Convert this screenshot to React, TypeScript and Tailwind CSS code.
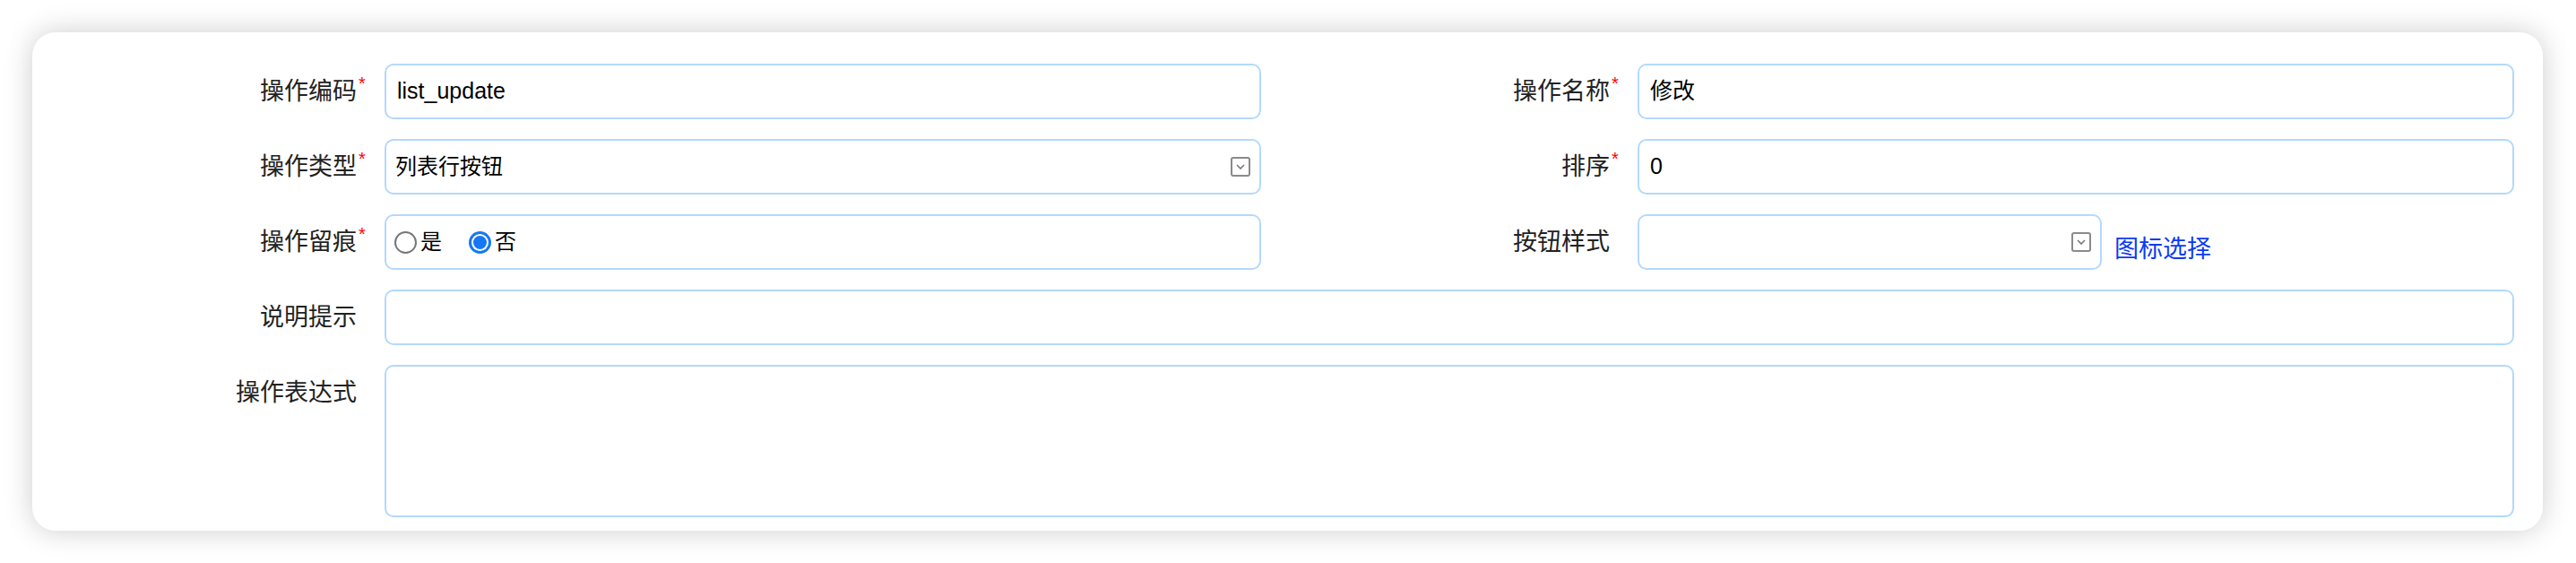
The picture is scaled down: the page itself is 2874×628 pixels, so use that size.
import React from 'react';

const FONT = '"Liberation Sans", "Noto Sans CJK SC", sans-serif';

// Right-aligned field label, with optional red required mark
const Label = ({ text, required, top }: { text: string; required?: boolean; top?: boolean }) => (
  <div className={`h-[62px] flex items-center justify-end pr-[31px] ${top ? 'self-start' : ''}`}>
    <span className="relative text-[27px] leading-none text-[#222]">
      {text}
      {required && (
        <span className="absolute left-full top-[-6px] ml-[2px] text-[20px] leading-none text-[#ff0000]">*</span>
      )}
    </span>
  </div>
);

const boxCls = 'h-[62px] rounded-[10px] border-2 border-[#b3d9fc] bg-white';

const TextBox = ({ value, className = '' }: { value?: string; className?: string }) => (
  <div className={`${boxCls} w-full flex items-center pl-[12px] text-[25px] text-black ${className}`}>
    {value}
  </div>
);

const SelectArrow = () => (
  <span className="w-[22px] h-[22px] rounded-[3px] border-2 border-[#8a8a8a] flex items-center justify-center">
    <svg width="10" height="6" viewBox="0 0 10 6" fill="none">
      <path d="M1 1l4 4 4-4" stroke="#777" strokeWidth="1.6" />
    </svg>
  </span>
);

const SelectBox = ({ value, className = 'w-full' }: { value?: string; className?: string }) => (
  <div className={`${boxCls} flex items-center justify-between pl-[10px] pr-[10px] text-[24px] text-black ${className}`}>
    <span>{value}</span>
    <SelectArrow />
  </div>
);

const Radio = ({ checked, label }: { checked?: boolean; label: string }) => (
  <label className="flex items-center gap-[4px] text-[24px] text-black">
    {checked ? (
      <span className="w-[25px] h-[25px] rounded-full bg-[#1677f5] flex items-center justify-center">
        <span className="w-[19px] h-[19px] rounded-full bg-white flex items-center justify-center">
          <span className="w-[15px] h-[15px] rounded-full bg-[#1677f5]" />
        </span>
      </span>
    ) : (
      <span className="w-[25px] h-[25px] rounded-full border-2 border-[#777] bg-white" />
    )}
    {label}
  </label>
);

export default function App() {
  return (
    <div className="w-full h-[628px] bg-white pt-[36px] pl-[36px] pr-[37px] pb-[36px]" style={{ fontFamily: FONT }}>
      <div className="h-full rounded-[26px] bg-white shadow-[0_0_32px_rgba(0,0,0,0.2)] pt-[35px] pb-[15px] pr-[32px]">
        <div className="grid grid-cols-[393px_1fr_420px_1fr] gap-y-[22px]">
          <Label text="操作编码" required />
          <TextBox value="list_update" />
          <Label text="操作名称" required />
          <TextBox value="修改" className="text-[24px]" />

          <Label text="操作类型" required />
          <SelectBox value="列表行按钮" />
          <Label text="排序" required />
          <TextBox value="0" />

          <Label text="操作留痕" required />
          <div className={`${boxCls} w-full flex items-center pl-[9px] gap-[30px]`}>
            <Radio label="是" />
            <Radio checked label="否" />
          </div>
          <Label text="按钮样式" />
          <div className="h-[62px] flex items-center gap-[14px]">
            <SelectBox className="w-[518px] shrink-0" />
            <a className="translate-y-[8px] whitespace-nowrap text-[27px] leading-none text-[#0a3af5] cursor-pointer">图标选择</a>
          </div>

          <Label text="说明提示" />
          <TextBox className="col-span-3" />

          <Label text="操作表达式" top />
          <div className="col-span-3 h-[170px] rounded-[10px] border-2 border-[#b3d9fc] bg-white" />
        </div>
      </div>
    </div>
  );
}
